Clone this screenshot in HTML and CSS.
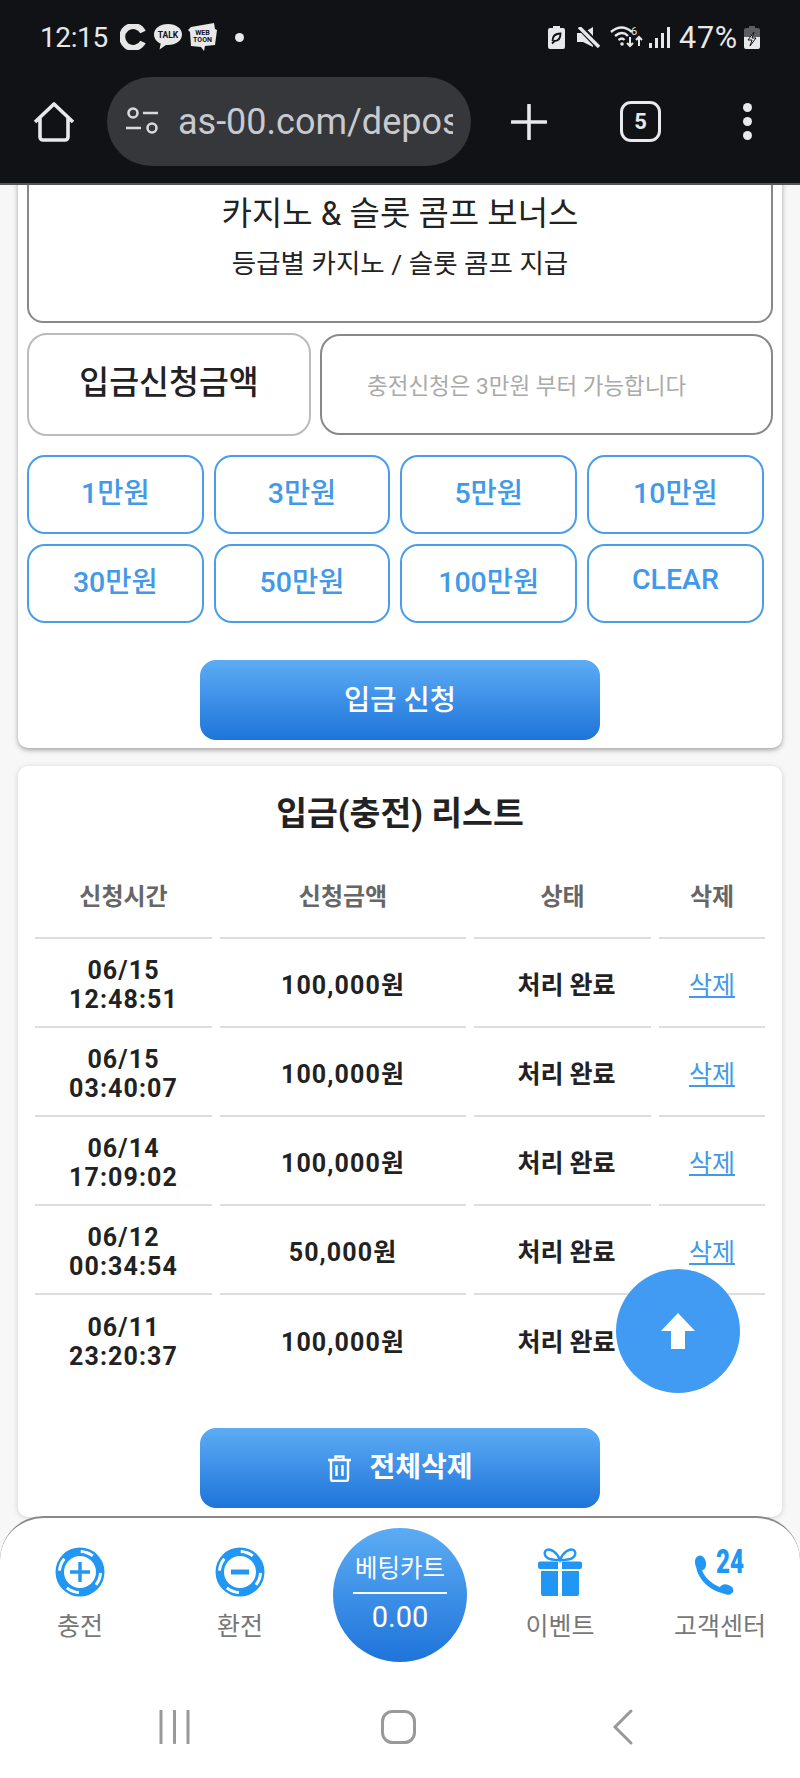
FILE: index.html
```html
<!DOCTYPE html>
<html lang="ko">
<head>
    <meta charset="UTF-8">
    <meta name="viewport" content="width=device-width, initial-scale=1.0">
    <title>입금 신청</title>
    <link rel="stylesheet" href="styles.css">
</head>
<body>
    <!-- Phone status bar and browser toolbar -->
    <header class="top-bar">
        <div class="status-bar">
            <span class="time">12:15</span>
            <svg class="st-c" width="26" height="26" viewBox="0 0 26 26"><path d="M23 8A11 11 0 1 0 23 18" fill="none" stroke="#e6e6e6" stroke-width="6"/></svg>
            <svg class="st-talk" width="28" height="26" viewBox="0 0 28 26"><path d="M14 0C6 0 0 4.500 0 10.500c0 4 2.700 7.400 6.700 9.100L5.500 25.500l6.500-4.600c.7.100 1.300.1 2 .1 8 0 14-4.600 14-10.500S22 0 14 0z" fill="#e8e8e8"/><text x="14" y="13.800" text-anchor="middle" class="mini-text" font-size="8.500">TALK</text></svg>
            <svg class="st-web" width="29" height="28" viewBox="0 0 29 28"><path d="M3 4 26 0l1 6 2 1-2 15-10 1-1 5-3-4-10-1L2 9 0 7z" fill="#e8e8e8"/><text x="14.500" y="11.500" text-anchor="middle" class="mini-text" font-size="7">WEB</text><text x="14.500" y="19" text-anchor="middle" class="mini-text" font-size="7">TOON</text></svg>
            <span class="st-dot"></span>
            <div class="status-right">
                <svg width="17" height="23" viewBox="0 0 17 23"><path d="M5 0h7v2h3a2 2 0 0 1 2 2v17a2 2 0 0 1-2 2H2a2 2 0 0 1-2-2V4a2 2 0 0 1 2-2h3z" fill="#e8e8ea"/><path d="M4.500 15C4.500 9.500 8 7.500 12.500 7.500c0 5-2.500 7.500-6 7.500L4 17.500" fill="none" stroke="#111216" stroke-width="1.800"/></svg>
                <svg class="st-mute" width="23" height="21" viewBox="0 0 23 21"><path d="M0 6h6l10-6v20L6 15H0z" fill="#e8e8ea"/><path d="M3 0l20 21" stroke="#111216" stroke-width="6.500"/><path d="M2 0l20 20" stroke="#e8e8ea" stroke-width="3.400"/></svg>
                <svg class="st-wifi" width="33" height="24" viewBox="0 0 33 24"><path d="M1 7c7-6 14-6 21 0M5 11c5-4 9-4 13 0M8.500 15c3-2 4-2 6 0" fill="none" stroke="#e8e8ea" stroke-width="2.400"/><circle cx="12" cy="19" r="1.800" fill="#e8e8ea"/><text x="21" y="9.500" class="mini-six" font-size="11">6</text><path d="M20 12v9m-3-3 3 3 3-3M29 21v-9m-3 3 3-3 3 3" fill="none" stroke="#e8e8ea" stroke-width="2"/></svg>
                <svg class="st-signal" width="21" height="21" viewBox="0 0 21 21"><path d="M0 16h3v5H0zM6 11h3v10H6zM12 6h3v15h-3zM18 0h3v21h-3z" fill="#e8e8ea"/></svg>
                <span class="battery-text">47%</span>
                <svg class="st-batt" width="16" height="23" viewBox="0 0 16 23"><path d="M5 0h6v2h3a2 2 0 0 1 2 2v7H0V4a2 2 0 0 1 2-2h3z" fill="#5c5d60"/><path d="M0 11h16v10a2 2 0 0 1-2 2H2a2 2 0 0 1-2-2z" fill="#e8e8ea"/><path d="M10 6 4 14h4l-2 6 6-8H8z" fill="#e8e8ea" stroke="#111216" stroke-width="1"/></svg>
            </div>
        </div>
        <div class="toolbar">
            <div class="tool tool-home">
                <svg width="42" height="42" viewBox="0 0 42 42"><path d="M2 21 21 3l19 18M7 17v19a3 3 0 0 0 3 3h22a3 3 0 0 0 3-3V17" fill="none" stroke="#e8e8ee" stroke-width="3.600" stroke-linejoin="round"/></svg>
            </div>
            <div class="url-pill">
                <svg class="tune" width="34" height="30" viewBox="0 0 34 30"><circle cx="8" cy="6" r="4.500" fill="none" stroke="#d8d9dd" stroke-width="2.600"/><path d="M18 6h15M1 21h15" stroke="#d8d9dd" stroke-width="2.600"/><circle cx="27" cy="21" r="4.500" fill="none" stroke="#d8d9dd" stroke-width="2.600"/></svg>
                <span class="url-text">as-00.com/deposit</span>
            </div>
            <div class="tool tool-plus">
                <svg width="36" height="36" viewBox="0 0 36 36"><path d="M18 1v34M1 18h34" stroke="#e8e8ee" stroke-width="3.600" stroke-linecap="round"/></svg>
            </div>
            <div class="tool tool-tabs"><span class="tab-count">5</span></div>
            <div class="tool tool-menu">
                <span class="menu-dot"></span><span class="menu-dot"></span><span class="menu-dot"></span>
            </div>
        </div>
    </header>

    <main class="content">
        <!-- Deposit form -->
        <section class="card card-form">
            <div class="notice-box">
                <h2 class="notice-title">카지노 &amp; 슬롯 콤프 보너스</h2>
                <p class="notice-sub">등급별 카지노 / 슬롯 콤프 지급</p>
            </div>
            <div class="amount-row">
                <div class="amount-label">입금신청금액</div>
                <div class="amount-input">충전신청은 3만원 부터 가능합니다</div>
            </div>
            <div class="amount-grid">
                <button class="amount-btn">1만원</button>
                <button class="amount-btn">3만원</button>
                <button class="amount-btn">5만원</button>
                <button class="amount-btn">10만원</button>
                <button class="amount-btn">30만원</button>
                <button class="amount-btn">50만원</button>
                <button class="amount-btn">100만원</button>
                <button class="amount-btn">CLEAR</button>
            </div>
            <button class="blue-btn submit-btn">입금 신청</button>
        </section>

        <!-- Deposit history -->
        <section class="card card-list">
            <h2 class="list-title">입금(충전) 리스트</h2>
            <table class="list-table">
                <colgroup>
                    <col class="col-time"><col class="col-amount"><col class="col-state"><col class="col-del">
                </colgroup>
                <thead>
                    <tr><th>신청시간</th><th>신청금액</th><th>상태</th><th>삭제</th></tr>
                </thead>
                <tbody>
                    <tr><td>06/15<br>12:48:51</td><td>100,000원</td><td class="state">처리 완료</td><td><a href="#">삭제</a></td></tr>
                    <tr><td>06/15<br>03:40:07</td><td>100,000원</td><td class="state">처리 완료</td><td><a href="#">삭제</a></td></tr>
                    <tr><td>06/14<br>17:09:02</td><td>100,000원</td><td class="state">처리 완료</td><td><a href="#">삭제</a></td></tr>
                    <tr><td>06/12<br>00:34:54</td><td>50,000원</td><td class="state">처리 완료</td><td><a href="#">삭제</a></td></tr>
                    <tr><td>06/11<br>23:20:37</td><td>100,000원</td><td class="state">처리 완료</td><td><a href="#">삭제</a></td></tr>
                </tbody>
            </table>
            <button class="blue-btn delete-all">
                <svg width="25" height="27" viewBox="0 0 25 27"><path d="M8.500 4V1.500h8V4M1 5h23M4 5v19a2 2 0 0 0 2 2h13a2 2 0 0 0 2-2V5M9.500 10v11M15.500 10v11" fill="none" stroke="#fff" stroke-width="2.400"/></svg>
                전체삭제
            </button>
        </section>
    </main>

    <button class="to-top">
        <svg width="36" height="36" viewBox="0 0 36 36"><path d="M18 0 35 18H25V36H11V18H1z" fill="#fff"/></svg>
    </button>

    <!-- Bottom tab bar -->
    <nav class="bottom-nav">
        <div class="nav-items">
            <div class="nav-item">
                <svg width="50" height="50" viewBox="0 0 50 50"><circle cx="25" cy="25" r="24.500" fill="#2196f3"/><circle cx="25" cy="25" r="20.500" fill="none" stroke="#fff" stroke-width="3" stroke-dasharray="13 19.200" transform="rotate(-88 25 25)"/><circle cx="25" cy="25" r="16" fill="#fff"/><path d="M25 15v20M15 25h20" stroke="#2196f3" stroke-width="3.400"/></svg>
                <span class="nav-label">충전</span>
            </div>
            <div class="nav-item">
                <svg width="50" height="50" viewBox="0 0 50 50"><circle cx="25" cy="25" r="24.500" fill="#2196f3"/><circle cx="25" cy="25" r="20.500" fill="none" stroke="#fff" stroke-width="3" stroke-dasharray="13 19.200" transform="rotate(-88 25 25)"/><circle cx="25" cy="25" r="16" fill="#fff"/><path d="M16 25h18" stroke="#2196f3" stroke-width="5"/></svg>
                <span class="nav-label">환전</span>
            </div>
            <div class="nav-cart">
                <span class="cart-title">베팅카트</span>
                <span class="cart-value">0.00</span>
            </div>
            <div class="nav-item">
                <svg width="44" height="50" viewBox="0 0 44 50"><path d="M22 13C19 5 12 1 8.500 3c-3 2-2 6 1 8 3 2 8 2 12.500 2s9.500 0 12.500-2c3-2 4-6 1-8C32 1 25 5 22 13z" fill="none" stroke="#2196f3" stroke-width="2.400"/><path d="M2 14.500h18V22H2a2 2 0 0 1-2-2v-3.500a2 2 0 0 1 2-2zM24 14.500h18a2 2 0 0 1 2 2V20a2 2 0 0 1-2 2H24zM3 24h17v25H5a2 2 0 0 1-2-2zM24 24h17v23a2 2 0 0 1-2 2H24z" fill="#2196f3"/></svg>
                <span class="nav-label">이벤트</span>
            </div>
            <div class="nav-item">
                <svg class="call-icon" width="52" height="50" viewBox="0 0 52 50"><ellipse cx="6.500" cy="16" rx="5.500" ry="7.500" transform="rotate(-12 6.500 16)" fill="#2196f3"/><path d="M4.500 19C6 31 17 41 30 44" fill="none" stroke="#2196f3" stroke-width="5"/><ellipse cx="32.500" cy="42.500" rx="7" ry="5" transform="rotate(14 32.500 42.500)" fill="#2196f3"/><text x="22" y="26" class="call-hours" font-size="33" textLength="28" lengthAdjust="spacingAndGlyphs">24</text></svg>
                <span class="nav-label">고객센터</span>
            </div>
        </div>
        <div class="system-nav">
            <svg width="31" height="34" viewBox="0 0 31 34"><path d="M2 1v32M15.500 1v32M29 1v32" stroke="#999" stroke-width="3" stroke-linecap="round"/></svg>
            <svg width="35" height="34" viewBox="0 0 35 34"><rect x="1.500" y="1.500" width="32" height="31" rx="10" fill="none" stroke="#999" stroke-width="3"/></svg>
            <svg width="21" height="36" viewBox="0 0 21 36"><path d="M19 2 3 18l16 16" fill="none" stroke="#999" stroke-width="3" stroke-linecap="round"/></svg>
        </div>
    </nav>
</body>
</html>
```
FILE: styles.css
```css
* {
    box-sizing: border-box;
}

body {
    margin: 0;
    width: 800px;
    height: 1778px;
    display: flex;
    flex-direction: column;
    position: relative;
    overflow: hidden;
    background-color: #f7f7f7;
    font-family: Roboto, "Noto Sans CJK KR", sans-serif;
}

/* Status bar + toolbar */
.top-bar {
    flex-shrink: 0;
    height: 185px;
    background-color: #111216;
    border-bottom: 2px solid #55565a;
    color: #e8e8ea;
    position: relative;
    z-index: 5;
}

.status-bar {
    height: 77px;
    padding: 0 40px 3px 40px;
    display: flex;
    align-items: center;
}

.time {
    font-size: 28px;
    letter-spacing: -0.4px;
    width: 80px;
}

.st-talk {
    margin-left: 8px;
}

.st-web {
    margin-left: 6px;
}

.st-dot {
    width: 9px;
    height: 9px;
    border-radius: 50%;
    background-color: #e8e8ea;
    margin-left: 18px;
}

.mini-text {
    font-family: Roboto, sans-serif;
    font-weight: 700;
    fill: #111216;
}

.mini-six {
    font-family: Roboto, sans-serif;
    fill: #e8e8ea;
}

.status-right {
    margin-left: auto;
    display: flex;
    align-items: center;
}

.st-mute {
    margin-left: 12px;
}

.st-wifi {
    margin-left: 10px;
}

.st-signal {
    margin-left: 6px;
}

.battery-text {
    font-size: 30.500px;
    letter-spacing: 0.8px;
    margin-left: 9px;
}

.st-batt {
    margin-left: 6px;
}

.toolbar {
    display: flex;
    height: 106px;
}

.tool {
    height: 89px;
    display: flex;
    align-items: center;
    justify-content: center;
}

.tool-home {
    width: 107px;
}

.tool-plus {
    width: 116px;
}

.tool-tabs {
    width: 107px;
}

.tool-menu {
    width: 106px;
    flex-direction: column;
    gap: 5px;
}

.url-pill {
    width: 364px;
    height: 89px;
    border-radius: 45px;
    background-color: #36373b;
    padding: 0 18px 0 18px;
    display: flex;
    align-items: center;
    overflow: hidden;
}

.tune {
    flex-shrink: 0;
    margin-right: 19px;
}

.url-text {
    font-size: 36px;
    color: #c8cacf;
    white-space: nowrap;
    overflow: hidden;
}

.tab-count {
    width: 41px;
    height: 41px;
    border: 3.500px solid #e8e8ee;
    border-radius: 11px;
    display: flex;
    align-items: center;
    justify-content: center;
    font-size: 22px;
    font-weight: 700;
}

.menu-dot {
    width: 9px;
    height: 9px;
    border-radius: 50%;
    background-color: #e8e8ee;
}

/* Page content */
.content {
    flex: 1;
    min-height: 0;
    overflow: hidden;
    padding: 0 18px;
}

.card {
    background-color: #fff;
    border-radius: 10px;
    padding: 9px;
}

.card-form {
    margin-top: -29px;
    padding-bottom: 8px;
    box-shadow: 0 2px 5px rgba(0, 0, 0, 0.35);
}

.card-list {
    margin-top: 18px;
    padding-top: 28px;
    box-shadow: 0 1px 6px rgba(0, 0, 0, 0.15);
}

.notice-box {
    border: 2px solid #888;
    border-radius: 16px;
    padding: 27px 0 40px;
    text-align: center;
}

.notice-title {
    margin: 0;
    font-size: 33px;
    line-height: 40px;
    font-weight: 400;
    color: #222;
}

.notice-sub {
    margin: 13px 0 0;
    font-size: 26.500px;
    line-height: 34px;
    color: #222;
}

.amount-row {
    display: flex;
    align-items: center;
    gap: 9px;
    margin-top: 10px;
}

.amount-label {
    width: 284px;
    height: 103px;
    padding-bottom: 10px;
    border: 2px solid #bbb;
    border-radius: 20px;
    display: flex;
    align-items: center;
    justify-content: center;
    font-size: 32.500px;
    font-weight: 500;
    color: #222;
}

.amount-input {
    flex: 1;
    height: 101px;
    padding: 0 0 2px 45px;
    border: 2px solid #888;
    border-radius: 20px;
    display: flex;
    align-items: center;
    font-size: 22.500px;
    color: #aaa;
}

.amount-grid {
    display: grid;
    grid-template-columns: repeat(4, 176.700px);
    gap: 10px;
    margin-top: 19px;
}

.amount-btn {
    height: 79px;
    padding: 0 0 8px;
    background-color: #fff;
    border: 2px solid #4a9dea;
    border-radius: 18px;
    color: #4299e9;
    font-family: inherit;
    font-size: 28.500px;
    font-weight: 500;
}

.blue-btn {
    display: flex;
    align-items: center;
    justify-content: center;
    gap: 17px;
    width: 400px;
    height: 80px;
    padding: 0 0 6px;
    border: none;
    border-radius: 16px;
    background: linear-gradient(#5cacf4, #1e74da);
    color: #fff;
    font-family: inherit;
}

.submit-btn {
    margin: 37px auto 0;
    font-size: 28.500px;
    font-weight: 500;
}

.list-title {
    margin: 0;
    font-size: 33.500px;
    line-height: 40px;
    font-weight: 700;
    color: #222;
    text-align: center;
}

.list-table {
    width: 746px;
    margin: 17px 0 0;
    border-collapse: separate;
    border-spacing: 8px 0;
    table-layout: fixed;
    text-align: center;
}

.col-time {
    width: 177px;
}

.col-amount {
    width: 246px;
}

.col-state {
    width: 177px;
}

.list-table th {
    height: 88px;
    border-bottom: 2px solid #ddd;
    font-size: 24px;
    font-weight: 700;
    color: #666;
}

.list-table td {
    height: 89px;
    padding: 5px 0 0;
    border-bottom: 2px solid #ddd;
    font-size: 25px;
    line-height: 29px;
    font-weight: 700;
    letter-spacing: 1.100px;
    color: #222;
}

.list-table td.state {
    padding-left: 8px;
    letter-spacing: 0;
}

.list-table tbody tr:last-child td {
    border-bottom: none;
}

.list-table a {
    font-weight: 400;
    letter-spacing: 0;
    color: #4299e9;
}

.delete-all {
    margin: 44px auto 0;
    font-size: 28px;
    font-weight: 700;
}

.delete-all svg {
    margin-top: 6px;
}

.to-top {
    position: absolute;
    left: 616px;
    top: 1269px;
    width: 124px;
    height: 124px;
    border: none;
    border-radius: 50%;
    background-color: #429bf2;
    display: flex;
    align-items: center;
    justify-content: center;
    z-index: 3;
}

/* Bottom tab bar */
.bottom-nav {
    flex-shrink: 0;
    height: 262px;
    margin-top: -40px;
    background-color: #fff;
    border-top: 2px solid #888;
    border-radius: 44px 44px 0 0;
    position: relative;
    z-index: 4;
}

.nav-items {
    display: flex;
    align-items: flex-start;
    padding-top: 29px;
}

.nav-item {
    width: 160px;
    display: flex;
    flex-direction: column;
    align-items: center;
}

.nav-label {
    margin-top: 13px;
    font-size: 25px;
    line-height: 34px;
    color: #777;
}

.call-icon {
    overflow: visible;
}

.call-hours {
    font-family: Roboto, sans-serif;
    font-weight: 900;
    fill: #2196f3;
}

.nav-cart {
    width: 134px;
    height: 134px;
    margin: -19px 13px 0;
    border-radius: 50%;
    background: linear-gradient(#5cacf4, #1e74da);
    color: #fff;
    display: flex;
    flex-direction: column;
    align-items: center;
}

.cart-title {
    width: 94px;
    margin-top: 23px;
    padding-bottom: 5px;
    border-bottom: 2px solid #fff;
    font-size: 24.500px;
    line-height: 36px;
    text-align: center;
    white-space: nowrap;
}

.cart-value {
    margin-top: 5px;
    font-size: 29px;
    line-height: 36px;
}

.system-nav {
    width: 672px;
    margin: 47px 0 0 62px;
    display: grid;
    grid-template-columns: repeat(3, 1fr);
    justify-items: center;
    align-items: center;
}
```
